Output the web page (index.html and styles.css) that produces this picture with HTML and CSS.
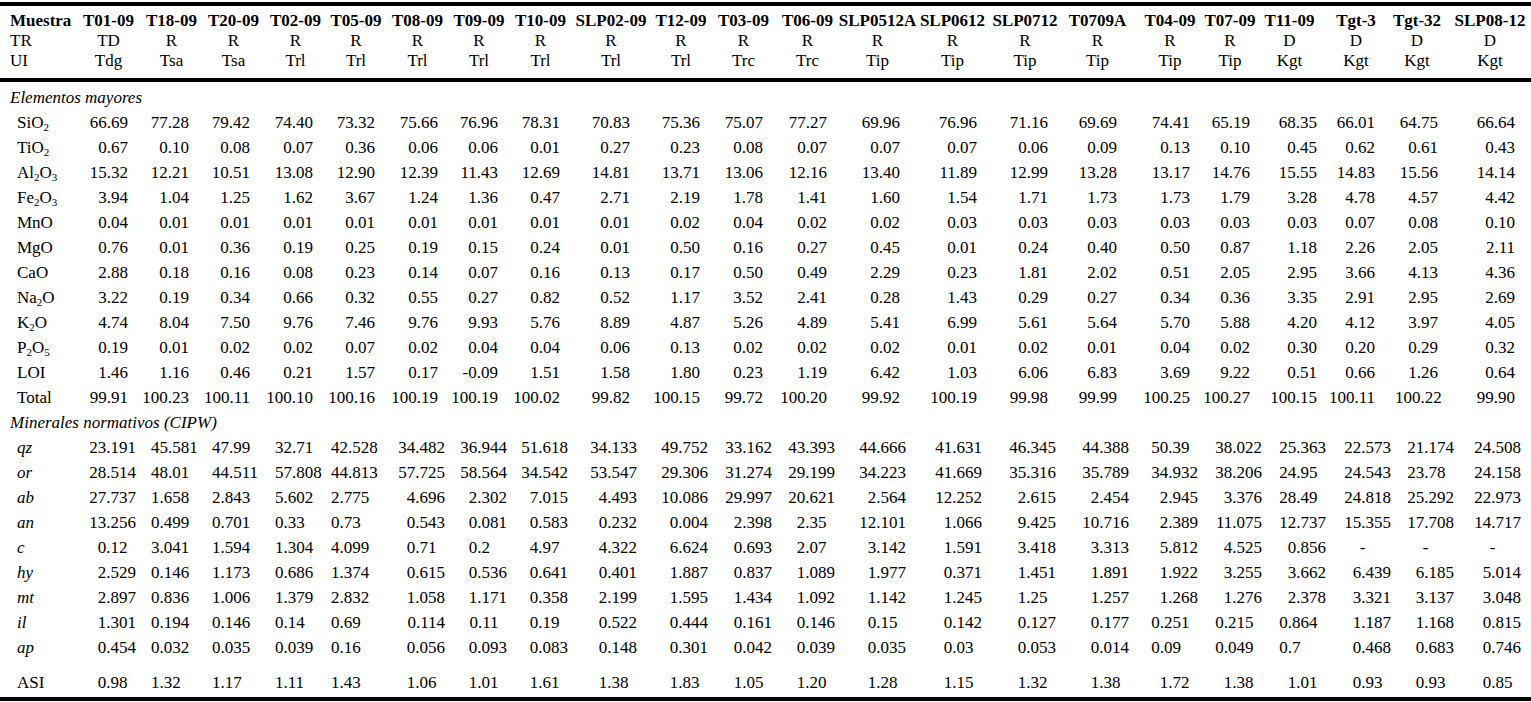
FILE: index.html
```html
<!DOCTYPE html>
<html lang="es">
<head>
<meta charset="utf-8">
<title>Muestras</title>
<link rel="stylesheet" href="styles.css">
</head>
<body>
<table class="tbl">
<colgroup>
<col class="w77"><col class="w63"><col class="w63"><col class="w61"><col class="w63"><col class="w58"><col class="w65"><col class="w58"><col class="w65"><col class="w76"><col class="w64"><col class="w61"><col class="w67"><col class="w73"><col class="w77"><col class="w68"><col class="w77"><col class="w64"><col class="w64"><col class="w64"><col class="w67"><col class="w61"><col class="w75">
</colgroup>
<thead>
<tr class="hd1"><th>Muestra</th><th><span>T01-09</span></th><th><span>T18-09</span></th><th><span>T20-09</span></th><th><span>T02-09</span></th><th><span>T05-09</span></th><th><span>T08-09</span></th><th><span>T09-09</span></th><th><span>T10-09</span></th><th><span>SLP02-09</span></th><th><span>T12-09</span></th><th><span>T03-09</span></th><th><span>T06-09</span></th><th><span>SLP0512A</span></th><th><span>SLP0612</span></th><th><span>SLP0712</span></th><th><span>T0709A</span></th><th><span>T04-09</span></th><th><span>T07-09</span></th><th><span>T11-09</span></th><th><span>Tgt-3</span></th><th><span>Tgt-32</span></th><th><span>SLP08-12</span></th></tr>
<tr class="hd2"><td>TR</td><td>TD</td><td>R</td><td>R</td><td>R</td><td>R</td><td>R</td><td>R</td><td>R</td><td>R</td><td>R</td><td>R</td><td>R</td><td>R</td><td>R</td><td>R</td><td>R</td><td>R</td><td>R</td><td>D</td><td>D</td><td>D</td><td>D</td></tr>
<tr class="hd3"><td>UI</td><td>Tdg</td><td>Tsa</td><td>Tsa</td><td>Trl</td><td>Trl</td><td>Trl</td><td>Trl</td><td>Trl</td><td>Trl</td><td>Trl</td><td>Trc</td><td>Trc</td><td>Tip</td><td>Tip</td><td>Tip</td><td>Tip</td><td>Tip</td><td>Tip</td><td>Kgt</td><td>Kgt</td><td>Kgt</td><td>Kgt</td></tr>
</thead>
<tbody>
<tr class="sec first"><td colspan="23">Elementos mayores</td></tr>
<tr class="m"><td>SiO<sub>2</sub></td><td>66.69</td><td>77.28</td><td>79.42</td><td>74.40</td><td>73.32</td><td>75.66</td><td>76.96</td><td>78.31</td><td>70.83</td><td>75.36</td><td>75.07</td><td>77.27</td><td>69.96</td><td>76.96</td><td>71.16</td><td>69.69</td><td>74.41</td><td>65.19</td><td>68.35</td><td>66.01</td><td>64.75</td><td>66.64</td></tr>
<tr class="m"><td>TiO<sub>2</sub></td><td>0.67</td><td>0.10</td><td>0.08</td><td>0.07</td><td>0.36</td><td>0.06</td><td>0.06</td><td>0.01</td><td>0.27</td><td>0.23</td><td>0.08</td><td>0.07</td><td>0.07</td><td>0.07</td><td>0.06</td><td>0.09</td><td>0.13</td><td>0.10</td><td>0.45</td><td>0.62</td><td>0.61</td><td>0.43</td></tr>
<tr class="m"><td>Al<sub>2</sub>O<sub>3</sub></td><td>15.32</td><td>12.21</td><td>10.51</td><td>13.08</td><td>12.90</td><td>12.39</td><td>11.43</td><td>12.69</td><td>14.81</td><td>13.71</td><td>13.06</td><td>12.16</td><td>13.40</td><td>11.89</td><td>12.99</td><td>13.28</td><td>13.17</td><td>14.76</td><td>15.55</td><td>14.83</td><td>15.56</td><td>14.14</td></tr>
<tr class="m"><td>Fe<sub>2</sub>O<sub>3</sub></td><td>3.94</td><td>1.04</td><td>1.25</td><td>1.62</td><td>3.67</td><td>1.24</td><td>1.36</td><td>0.47</td><td>2.71</td><td>2.19</td><td>1.78</td><td>1.41</td><td>1.60</td><td>1.54</td><td>1.71</td><td>1.73</td><td>1.73</td><td>1.79</td><td>3.28</td><td>4.78</td><td>4.57</td><td>4.42</td></tr>
<tr class="m"><td>MnO</td><td>0.04</td><td>0.01</td><td>0.01</td><td>0.01</td><td>0.01</td><td>0.01</td><td>0.01</td><td>0.01</td><td>0.01</td><td>0.02</td><td>0.04</td><td>0.02</td><td>0.02</td><td>0.03</td><td>0.03</td><td>0.03</td><td>0.03</td><td>0.03</td><td>0.03</td><td>0.07</td><td>0.08</td><td>0.10</td></tr>
<tr class="m"><td>MgO</td><td>0.76</td><td>0.01</td><td>0.36</td><td>0.19</td><td>0.25</td><td>0.19</td><td>0.15</td><td>0.24</td><td>0.01</td><td>0.50</td><td>0.16</td><td>0.27</td><td>0.45</td><td>0.01</td><td>0.24</td><td>0.40</td><td>0.50</td><td>0.87</td><td>1.18</td><td>2.26</td><td>2.05</td><td>2.11</td></tr>
<tr class="m"><td>CaO</td><td>2.88</td><td>0.18</td><td>0.16</td><td>0.08</td><td>0.23</td><td>0.14</td><td>0.07</td><td>0.16</td><td>0.13</td><td>0.17</td><td>0.50</td><td>0.49</td><td>2.29</td><td>0.23</td><td>1.81</td><td>2.02</td><td>0.51</td><td>2.05</td><td>2.95</td><td>3.66</td><td>4.13</td><td>4.36</td></tr>
<tr class="m"><td>Na<sub>2</sub>O</td><td>3.22</td><td>0.19</td><td>0.34</td><td>0.66</td><td>0.32</td><td>0.55</td><td>0.27</td><td>0.82</td><td>0.52</td><td>1.17</td><td>3.52</td><td>2.41</td><td>0.28</td><td>1.43</td><td>0.29</td><td>0.27</td><td>0.34</td><td>0.36</td><td>3.35</td><td>2.91</td><td>2.95</td><td>2.69</td></tr>
<tr class="m"><td>K<sub>2</sub>O</td><td>4.74</td><td>8.04</td><td>7.50</td><td>9.76</td><td>7.46</td><td>9.76</td><td>9.93</td><td>5.76</td><td>8.89</td><td>4.87</td><td>5.26</td><td>4.89</td><td>5.41</td><td>6.99</td><td>5.61</td><td>5.64</td><td>5.70</td><td>5.88</td><td>4.20</td><td>4.12</td><td>3.97</td><td>4.05</td></tr>
<tr class="m"><td>P<sub>2</sub>O<sub>5</sub></td><td>0.19</td><td>0.01</td><td>0.02</td><td>0.02</td><td>0.07</td><td>0.02</td><td>0.04</td><td>0.04</td><td>0.06</td><td>0.13</td><td>0.02</td><td>0.02</td><td>0.02</td><td>0.01</td><td>0.02</td><td>0.01</td><td>0.04</td><td>0.02</td><td>0.30</td><td>0.20</td><td>0.29</td><td>0.32</td></tr>
<tr class="m"><td>LOI</td><td>1.46</td><td>1.16</td><td>0.46</td><td>0.21</td><td>1.57</td><td>0.17</td><td>-0.09</td><td>1.51</td><td>1.58</td><td>1.80</td><td>0.23</td><td>1.19</td><td>6.42</td><td>1.03</td><td>6.06</td><td>6.83</td><td>3.69</td><td>9.22</td><td>0.51</td><td>0.66</td><td>1.26</td><td>0.64</td></tr>
<tr class="m"><td>Total</td><td>99.91</td><td>100.23</td><td>100.11</td><td>100.10</td><td>100.16</td><td>100.19</td><td>100.19</td><td>100.02</td><td>99.82</td><td>100.15</td><td>99.72</td><td>100.20</td><td>99.92</td><td>100.19</td><td>99.98</td><td>99.99</td><td>100.25</td><td>100.27</td><td>100.15</td><td>100.11</td><td>100.22</td><td>99.90</td></tr>
<tr class="sec"><td colspan="23">Minerales normativos (CIPW)</td></tr>
<tr class="c it"><td>qz</td><td>23.191</td><td>45.581</td><td>47.99</td><td>32.71</td><td>42.528</td><td>34.482</td><td>36.944</td><td>51.618</td><td>34.133</td><td>49.752</td><td>33.162</td><td>43.393</td><td>44.666</td><td>41.631</td><td>46.345</td><td>44.388</td><td><span class="l">50.39</span></td><td>38.022</td><td>25.363</td><td>22.573</td><td>21.174</td><td>24.508</td></tr>
<tr class="c it"><td>or</td><td>28.514</td><td>48.01</td><td>44.511</td><td>57.808</td><td>44.813</td><td>57.725</td><td>58.564</td><td>34.542</td><td>53.547</td><td>29.306</td><td>31.274</td><td>29.199</td><td>34.223</td><td>41.669</td><td>35.316</td><td>35.789</td><td>34.932</td><td>38.206</td><td><span class="l">24.95</span></td><td>24.543</td><td><span class="l">23.78</span></td><td>24.158</td></tr>
<tr class="c it"><td>ab</td><td>27.737</td><td>1.658</td><td>2.843</td><td>5.602</td><td>2.775</td><td>4.696</td><td>2.302</td><td>7.015</td><td>4.493</td><td>10.086</td><td>29.997</td><td>20.621</td><td>2.564</td><td>12.252</td><td>2.615</td><td>2.454</td><td>2.945</td><td>3.376</td><td><span class="l">28.49</span></td><td>24.818</td><td>25.292</td><td>22.973</td></tr>
<tr class="c it"><td>an</td><td>13.256</td><td>0.499</td><td>0.701</td><td>0.33</td><td>0.73</td><td>0.543</td><td>0.081</td><td>0.583</td><td>0.232</td><td>0.004</td><td>2.398</td><td><span class="d2">2.35</span></td><td>12.101</td><td>1.066</td><td>9.425</td><td>10.716</td><td>2.389</td><td>11.075</td><td>12.737</td><td>15.355</td><td>17.708</td><td>14.717</td></tr>
<tr class="c it"><td>c</td><td><span class="d2">0.12</span></td><td>3.041</td><td>1.594</td><td>1.304</td><td>4.099</td><td><span class="d2">0.71</span></td><td><span class="d1">0.2</span></td><td><span class="d2">4.97</span></td><td>4.322</td><td>6.624</td><td>0.693</td><td><span class="d2">2.07</span></td><td>3.142</td><td>1.591</td><td>3.418</td><td>3.313</td><td>5.812</td><td>4.525</td><td>0.856</td><td><span class="z">-</span></td><td><span class="z">-</span></td><td><span class="z">-</span></td></tr>
<tr class="c it"><td>hy</td><td>2.529</td><td>0.146</td><td>1.173</td><td>0.686</td><td>1.374</td><td>0.615</td><td>0.536</td><td>0.641</td><td>0.401</td><td>1.887</td><td>0.837</td><td>1.089</td><td>1.977</td><td>0.371</td><td>1.451</td><td>1.891</td><td>1.922</td><td>3.255</td><td>3.662</td><td>6.439</td><td>6.185</td><td>5.014</td></tr>
<tr class="c it"><td>mt</td><td>2.897</td><td>0.836</td><td>1.006</td><td>1.379</td><td>2.832</td><td>1.058</td><td>1.171</td><td>0.358</td><td>2.199</td><td>1.595</td><td>1.434</td><td>1.092</td><td>1.142</td><td>1.245</td><td><span class="d2">1.25</span></td><td>1.257</td><td>1.268</td><td>1.276</td><td>2.378</td><td>3.321</td><td>3.137</td><td>3.048</td></tr>
<tr class="c it"><td>il</td><td>1.301</td><td>0.194</td><td>0.146</td><td>0.14</td><td>0.69</td><td>0.114</td><td><span class="d2">0.11</span></td><td><span class="d2">0.19</span></td><td>0.522</td><td>0.444</td><td>0.161</td><td>0.146</td><td><span class="d2">0.15</span></td><td>0.142</td><td>0.127</td><td>0.177</td><td><span class="l">0.251</span></td><td><span class="l">0.215</span></td><td><span class="l">0.864</span></td><td>1.187</td><td>1.168</td><td>0.815</td></tr>
<tr class="c it"><td>ap</td><td>0.454</td><td>0.032</td><td>0.035</td><td>0.039</td><td>0.16</td><td>0.056</td><td>0.093</td><td>0.083</td><td>0.148</td><td>0.301</td><td>0.042</td><td>0.039</td><td>0.035</td><td><span class="d2">0.03</span></td><td>0.053</td><td>0.014</td><td><span class="l">0.09</span></td><td><span class="l">0.049</span></td><td><span class="l">0.7</span></td><td>0.468</td><td>0.683</td><td>0.746</td></tr>
<tr class="c asi"><td>ASI</td><td><span class="d2">0.98</span></td><td>1.32</td><td>1.17</td><td>1.11</td><td>1.43</td><td><span class="d2">1.06</span></td><td><span class="d2">1.01</span></td><td><span class="d2">1.61</span></td><td><span class="d2">1.38</span></td><td><span class="d2">1.83</span></td><td><span class="d2">1.05</span></td><td><span class="d2">1.20</span></td><td><span class="d2">1.28</span></td><td><span class="d2">1.15</span></td><td><span class="d2">1.32</span></td><td><span class="d2">1.38</span></td><td><span class="d2">1.72</span></td><td><span class="d2">1.38</span></td><td><span class="d2">1.01</span></td><td><span class="d2">0.93</span></td><td><span class="d2">0.93</span></td><td><span class="d2">0.85</span></td></tr>
</tbody>
</table>
</body>
</html>
```
FILE: styles.css
```css
body {
  margin: 0;
  background: #fff;
  color: #000;
  font-family: "Liberation Serif", "Times New Roman", serif;
  font-size: 17px;
}

.tbl {
  width: 1531px;
  margin-top: 2px;
  table-layout: fixed;
  border-collapse: separate;
  border-spacing: 0;
  border-top: 4px solid #000;
  border-bottom: 4px solid #000;
}

.w58 { width: 58px; }
.w61 { width: 61px; }
.w63 { width: 63px; }
.w64 { width: 64px; }
.w65 { width: 65px; }
.w67 { width: 67px; }
.w68 { width: 68px; }
.w73 { width: 73px; }
.w75 { width: 75px; }
.w76 { width: 76px; }
.w77 { width: 77px; }

.tbl th,
.tbl td {
  padding: 0;
  line-height: 20px;
  white-space: nowrap;
  font-weight: normal;
  text-align: center;
  vertical-align: top;
}

.tbl thead th { font-weight: bold; }
.tbl thead span { display: inline-block; margin: 0 -14px; }

.tbl .hd1 > * { padding-top: 5px; }
.tbl .hd3 > * { padding-bottom: 7px; border-bottom: 4px solid #000; }

.tbl thead tr > :first-child { text-align: left; padding-left: 10px; }
.tbl thead tr > :nth-child(18) { padding-left: 4px; }
.tbl thead tr > :nth-child(19) { padding-right: 4px; }
.tbl thead tr > :nth-child(20) { padding-right: 13px; }
.tbl thead tr > :nth-child(21) { padding-right: 11px; }
.tbl thead tr > :nth-child(22) { padding-right: 17px; }
.tbl thead tr > :nth-child(23) { padding-right: 7px; }

.tbl tbody td { line-height: 25px; text-align: right; }
.tbl tbody td:first-child { text-align: left; padding-left: 17px; }
.tbl tbody .sec td { text-align: left; padding-left: 10px; font-style: italic; }
.tbl tbody .first td { padding-top: 3px; }
.tbl .it td:first-child { font-style: italic; }

sub {
  font-size: 11px;
  line-height: 0;
  vertical-align: -3px;
}

/* mayores: right edge of 2-decimal values */
.m td:nth-child(2) { padding-right: 12px; }
.m td:nth-child(3) { padding-right: 14px; }
.m td:nth-child(4) { padding-right: 14px; }
.m td:nth-child(5) { padding-right: 14px; }
.m td:nth-child(6) { padding-right: 10px; }
.m td:nth-child(7) { padding-right: 12px; }
.m td:nth-child(8) { padding-right: 10px; }
.m td:nth-child(9) { padding-right: 13px; }
.m td:nth-child(10) { padding-right: 19px; }
.m td:nth-child(11) { padding-right: 13px; }
.m td:nth-child(12) { padding-right: 11px; }
.m td:nth-child(13) { padding-right: 14px; }
.m td:nth-child(14) { padding-right: 14px; }
.m td:nth-child(15) { padding-right: 14px; }
.m td:nth-child(16) { padding-right: 11px; }
.m td:nth-child(17) { padding-right: 19px; }
.m td:nth-child(18) { padding-right: 10px; }
.m td:nth-child(19) { padding-right: 14px; }
.m td:nth-child(20) { padding-right: 11px; }
.m td:nth-child(21) { padding-right: 20px; }
.m td:nth-child(22) { padding-right: 18px; }
.m td:nth-child(23) { padding-right: 16px; }

/* CIPW: right edge of 3-decimal values */
.c td:nth-child(2) { padding-right: 4px; }
.c td:nth-child(3) { text-align: left; padding-left: 11px; }
.c td:nth-child(4) { text-align: left; padding-left: 9px; }
.c td:nth-child(5) { text-align: left; padding-left: 11px; }
.c td:nth-child(6) { text-align: left; padding-left: 4px; }
.c td:nth-child(7) { padding-right: 5px; }
.c td:nth-child(8) { padding-right: 1px; }
.c td:nth-child(9) { padding-right: 5px; }
.c td:nth-child(10) { padding-right: 12px; }
.c td:nth-child(11) { padding-right: 5px; }
.c td:nth-child(12) { padding-right: 2px; }
.c td:nth-child(13) { padding-right: 6px; }
.c td:nth-child(14) { padding-right: 8px; }
.c td:nth-child(15) { padding-right: 9px; }
.c td:nth-child(16) { padding-right: 3px; }
.c td:nth-child(17) { padding-right: 7px; }
.c td:nth-child(18) { padding-right: 2px; }
.c td:nth-child(19) { padding-right: 2px; }
.c td:nth-child(20) { padding-right: 2px; }
.c td:nth-child(21) { padding-right: 4px; }
.c td:nth-child(22) { padding-right: 2px; }
.c td:nth-child(23) { padding-right: 10px; }

.tbl tbody .asi td { padding-top: 10px; padding-bottom: 2px; }

.l { display: inline-block; width: 2.75em; text-align: left; }
.d2 { padding-right: 0.5em; }
.d1 { padding-right: 1em; }
.z { padding-right: 1.5em; }
```
